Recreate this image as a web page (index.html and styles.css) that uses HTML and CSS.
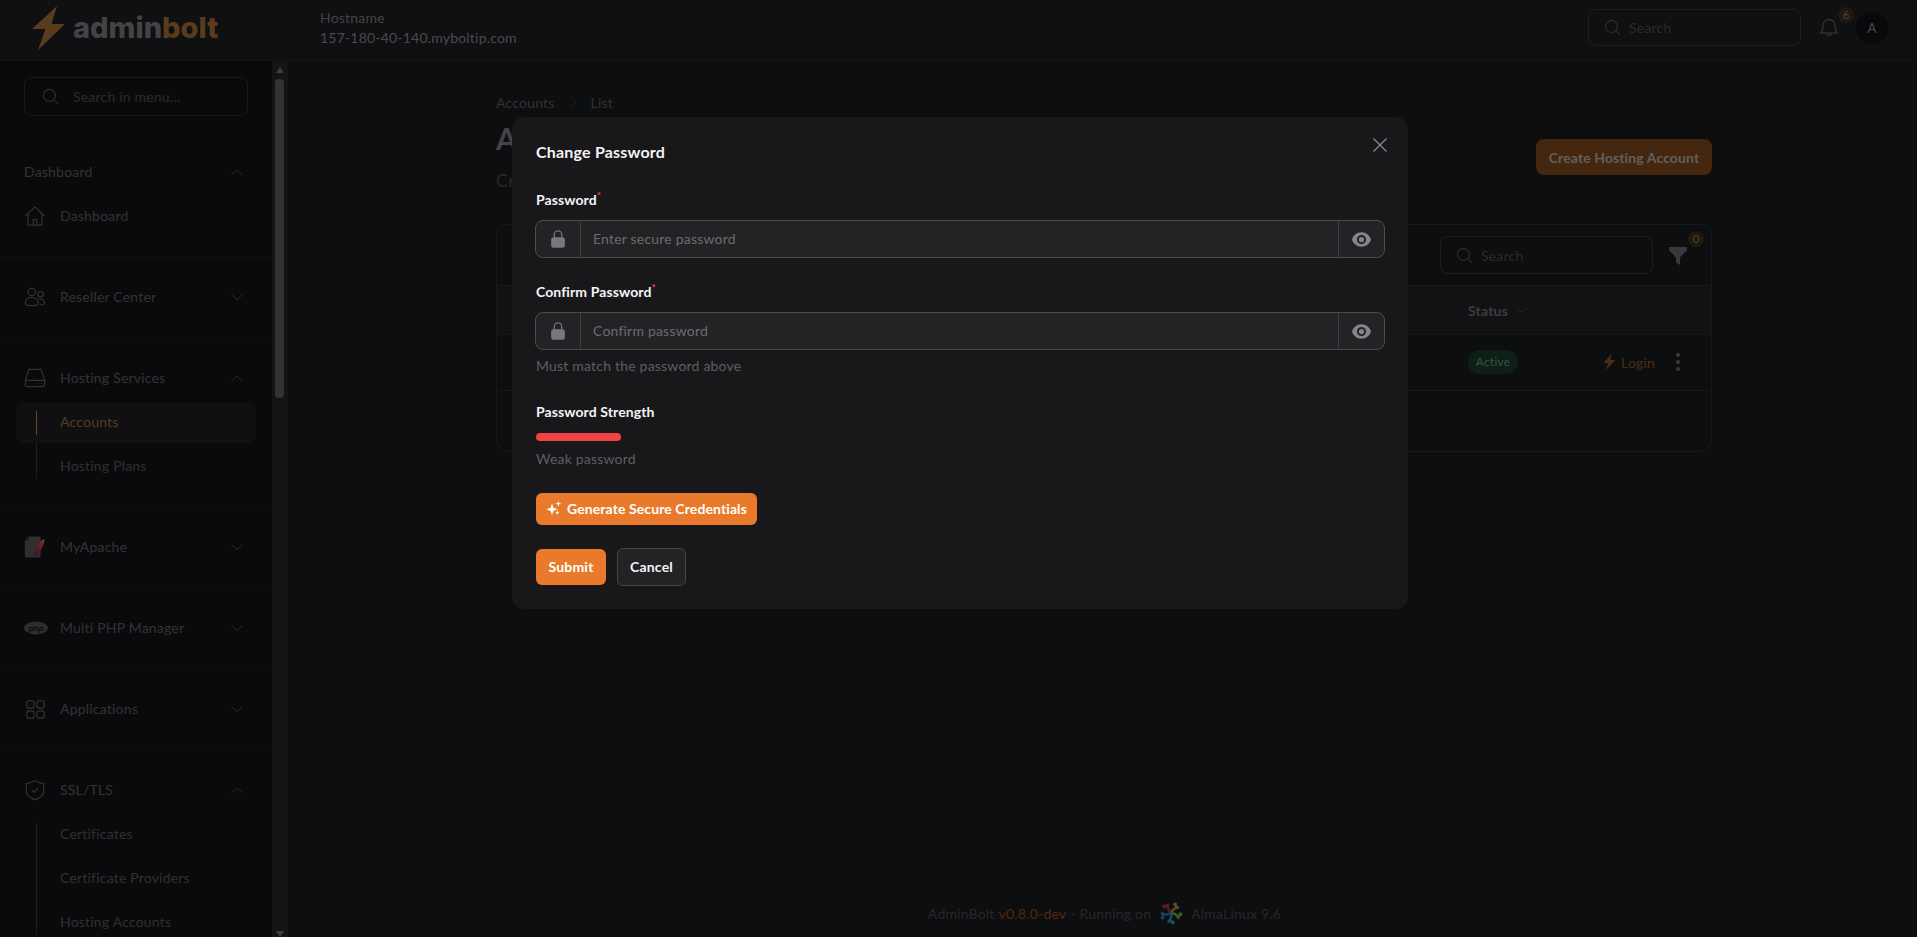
FILE: index.html
```html
<!DOCTYPE html>
<html lang="en">
<head>
    <meta charset="UTF-8">
    <meta name="viewport" content="width=device-width, initial-scale=1.0">
    <title>Accounts - AdminBolt</title>
    <link rel="stylesheet" href="styles.css">
</head>
<body>
    <svg class="sprite" xmlns="http://www.w3.org/2000/svg">
        <symbol id="i-search" viewBox="0 0 24 24"><circle cx="10.5" cy="10.5" r="8.5" fill="none" stroke="currentColor" stroke-width="1.6"/><path d="M17 17l5.5 5.5" fill="none" stroke="currentColor" stroke-width="1.6"/></symbol>
        <symbol id="i-up" viewBox="0 0 24 24"><path d="M2 17l10-9 10 9" fill="none" stroke="currentColor" stroke-width="1.8" stroke-linecap="round" stroke-linejoin="round"/></symbol>
        <symbol id="i-down" viewBox="0 0 24 24"><path d="M2 8l10 9 10-9" fill="none" stroke="currentColor" stroke-width="1.8" stroke-linecap="round" stroke-linejoin="round"/></symbol>
        <symbol id="i-bolt" viewBox="0 0 24 32"><path d="M16 0L0 18h9.5L5 32l19-20H13.5z" fill="currentColor"/></symbol>
        <symbol id="i-lock" viewBox="0 0 24 24"><path fill="currentColor" fill-rule="evenodd" d="M12 1.5a5.25 5.25 0 00-5.25 5.25v3a3 3 0 00-3 3v6.75a3 3 0 003 3h10.5a3 3 0 003-3v-6.75a3 3 0 00-3-3v-3A5.25 5.25 0 0012 1.5zm3.75 8.25v-3a3.75 3.75 0 10-7.5 0v3h7.5z" clip-rule="evenodd"/></symbol>
        <symbol id="i-eye" viewBox="0 0 24 24"><path fill="currentColor" d="M12 15a3 3 0 100-6 3 3 0 000 6z"/><path fill="currentColor" fill-rule="evenodd" d="M1.32 11.45C2.81 6.98 7.03 3.75 12 3.75c4.97 0 9.19 3.22 10.68 7.69.12.36.12.76 0 1.12-1.49 4.47-5.71 7.69-10.68 7.69-4.97 0-9.19-3.22-10.68-7.69a1.76 1.76 0 010-1.11zM17.25 12a5.25 5.25 0 11-10.5 0 5.25 5.25 0 0110.5 0z" clip-rule="evenodd"/></symbol>
        <symbol id="i-arm" viewBox="0 0 24 24"><path d="M11.500 11c-2.500-1.500-3-4-2.500-7.500M9 3.500c-1 1.500-2.500 2-4 1.500" fill="none" stroke="currentColor" stroke-width="2.400" stroke-linecap="round"/><circle cx="5" cy="5.500" r="1.900" fill="currentColor"/></symbol>
    </svg>

    <div class="app">
        <header class="topbar">
            <div class="brand">
                <svg class="brand-bolt" viewBox="0 0 33 44"><path d="M25 0L0 23h13.500L6 44l27-26H19.500z" fill="#5a3c1d"/></svg>
                <span class="brand-name">admin<span class="brand-accent">bolt</span></span>
            </div>
            <div class="hostname">
                <div class="hostname-label">Hostname</div>
                <div>157-180-40-140.myboltip.com</div>
            </div>
            <div class="topbar-right">
                <div class="search search-top">
                    <svg class="search-icon"><use href="#i-search"/></svg>
                    <span>Search</span>
                </div>
                <div class="bell">
                    <svg viewBox="0 0 24 24" width="24" height="24" fill="none" stroke="currentColor" stroke-width="1.5" stroke-linejoin="round"><path d="M6 9.500a6 6 0 0112 0c0 4 1 6 2.800 7.600H3.200C5 15.500 6 13.500 6 9.500z"/><path d="M9.300 17.500a2.800 2.800 0 005.400 0"/></svg>
                    <span class="count-badge bell-badge">6</span>
                </div>
                <div class="avatar">A</div>
            </div>
        </header>

        <div class="layout">
            <aside class="sidebar">
                <div class="search search-menu">
                    <svg class="search-icon"><use href="#i-search"/></svg>
                    <span>Search in menu...</span>
                </div>

                <nav class="menu">
                    <section class="menu-group menu-group-first">
                        <div class="menu-row">
                            <span class="menu-label">Dashboard</span>
                            <svg class="chev"><use href="#i-up"/></svg>
                        </div>
                        <div class="menu-row">
                            <svg class="menu-icon" viewBox="0 0 24 24" fill="none" stroke="currentColor" stroke-width="1.3" stroke-linejoin="round"><path d="M1.500 12L12 2l10.500 10M4.500 9.500V22h15V9.500M10 22v-6h4v6"/></svg>
                            <span class="menu-label">Dashboard</span>
                        </div>
                    </section>

                    <section class="menu-group">
                        <div class="menu-row">
                            <svg class="menu-icon" viewBox="0 0 24 24" fill="none" stroke="currentColor" stroke-width="1.3"><circle cx="8.500" cy="6.500" r="4"/><circle cx="18" cy="9" r="3"/><path d="M1.500 19c0-4 3-6.500 7-6.500s7 2.500 7 6.500c0 2-3 2.500-7 2.500s-7-.5-7-2.500zM16.500 14c3 0 6 1.500 6 4.500 0 1.500-2 2-4.500 2"/></svg>
                            <span class="menu-label">Reseller Center</span>
                            <svg class="chev"><use href="#i-down"/></svg>
                        </div>
                    </section>

                    <section class="menu-group">
                        <div class="menu-row">
                            <svg class="menu-icon" viewBox="0 0 24 24" fill="none" stroke="currentColor" stroke-width="1.3" stroke-linejoin="round"><path d="M5.500 2.500h13L22.500 14v5.500a2 2 0 01-2 2h-17a2 2 0 01-2-2V14zM1.500 14.500h21"/><path d="M16 18h.8M19 18h.8"/></svg>
                            <span class="menu-label">Hosting Services</span>
                            <svg class="chev"><use href="#i-up"/></svg>
                        </div>
                        <div class="submenu">
                            <div class="submenu-item active">Accounts</div>
                            <div class="submenu-item">Hosting Plans</div>
                        </div>
                    </section>

                    <section class="menu-group">
                        <div class="menu-row">
                            <svg class="menu-icon" viewBox="0 0 24 24">
                                <defs><linearGradient id="feather" x1="1" y1="0" x2="0" y2="1"><stop offset="0" stop-color="#6a4418"/><stop offset="0.5" stop-color="#5a1c26"/><stop offset="1" stop-color="#2c1430"/></linearGradient></defs>
                                <path d="M5 .5h13v23H1V5z" fill="#2f2f32"/><path d="M5 .5V5H1z" fill="#1c1c1e"/>
                                <path d="M22.500 3c-5 1.500-9 7-11 17l-1 3.500c5-3 11-10 12-20.500z" fill="url(#feather)"/>
                            </svg>
                            <span class="menu-label">MyApache</span>
                            <svg class="chev"><use href="#i-down"/></svg>
                        </div>
                    </section>

                    <section class="menu-group">
                        <div class="menu-row">
                            <svg class="menu-icon menu-icon-php" viewBox="0 0 24 14"><ellipse cx="12" cy="7" rx="12" ry="6.500" fill="#2e2e30"/><text class="php-text" x="12" y="9.800">php</text></svg>
                            <span class="menu-label">Multi PHP Manager</span>
                            <svg class="chev"><use href="#i-down"/></svg>
                        </div>
                    </section>

                    <section class="menu-group">
                        <div class="menu-row">
                            <svg class="menu-icon" viewBox="0 0 24 24" fill="none" stroke="currentColor" stroke-width="1.3"><rect x="3" y="3" width="8" height="8" rx="2.500"/><rect x="14" y="3" width="8" height="8" rx="2.500"/><rect x="3" y="14" width="8" height="8" rx="2.500"/><rect x="14" y="14" width="8" height="8" rx="2.500"/></svg>
                            <span class="menu-label">Applications</span>
                            <svg class="chev"><use href="#i-down"/></svg>
                        </div>
                    </section>

                    <section class="menu-group">
                        <div class="menu-row">
                            <svg class="menu-icon" viewBox="0 0 24 24" fill="none" stroke="currentColor" stroke-width="1.3" stroke-linejoin="round"><path d="M12 1.500c3 2.300 6 3.500 9.500 3.500v7c0 5.500-4 9-9.500 10.500C6.500 21 2.500 17.500 2.500 12V5C6 5 9 3.800 12 1.500z"/><path d="M8.500 12l2.500 2.500 4.500-5"/></svg>
                            <span class="menu-label">SSL/TLS</span>
                            <svg class="chev"><use href="#i-up"/></svg>
                        </div>
                        <div class="submenu">
                            <div class="submenu-item">Certificates</div>
                            <div class="submenu-item">Certificate Providers</div>
                            <div class="submenu-item">Hosting Accounts</div>
                        </div>
                    </section>
                </nav>
            </aside>

            <div class="scrollbar">
                <span class="scroll-arrow-up"></span>
                <span class="scroll-thumb"></span>
                <span class="scroll-arrow-down"></span>
            </div>

            <main class="main">
                <div class="content">
                    <div class="breadcrumbs">
                        <span>Accounts</span>
                        <svg class="crumb-sep" viewBox="0 0 24 24" fill="none" stroke="currentColor" stroke-width="1.800"><path d="M8 2l10 10-10 10"/></svg>
                        <span>List</span>
                    </div>
                    <div class="page-head">
                        <div>
                            <h1>Accounts</h1>
                            <p class="subtitle">Create and manage hosting accounts</p>
                        </div>
                        <div class="btn-create">Create Hosting Account</div>
                    </div>
                    <div class="table-card">
                        <div class="table-tools">
                            <div class="search search-table">
                                <svg class="search-icon"><use href="#i-search"/></svg>
                                <span>Search</span>
                            </div>
                            <div class="filter">
                                <svg viewBox="0 0 24 24" width="24" height="24"><path d="M3 4h18v3l-7 7.500V22l-4-2.500v-5L3 7z" fill="#39393c"/></svg>
                                <span class="count-badge filter-badge">0</span>
                            </div>
                        </div>
                        <div class="table-head">
                            <span>Status</span>
                            <svg class="chev"><use href="#i-down"/></svg>
                        </div>
                        <div class="table-row">
                            <span class="pill-active">Active</span>
                            <span class="login">
                                <svg class="login-bolt"><use href="#i-bolt"/></svg>
                                Login
                            </span>
                            <span class="dots"><i></i><i></i><i></i></span>
                        </div>
                    </div>
                </div>
                <footer class="footer">
                    <span>AdminBolt</span>
                    <span class="footer-version">v0.8.0-dev</span>
                    <span>- Running on</span>
                    <svg class="alma" viewBox="0 0 24 24">
                        <use href="#i-arm" color="#5a1d24"/>
                        <use href="#i-arm" color="#5a4a1c" transform="rotate(72 12 12)"/>
                        <use href="#i-arm" color="#3f5a22" transform="rotate(144 12 12)"/>
                        <use href="#i-arm" color="#1c4f5c" transform="rotate(216 12 12)"/>
                        <use href="#i-arm" color="#17406a" transform="rotate(288 12 12)"/>
                    </svg>
                    <span>AlmaLinux 9.6</span>
                </footer>
            </main>
        </div>
    </div>

    <div class="modal-layer">
        <div class="modal">
            <div class="modal-head">
                <h2>Change Password</h2>
                <svg class="modal-close" viewBox="0 0 14 14" fill="none" stroke="currentColor" stroke-width="1.200"><path d="M.5.500l13 13M13.500.500l-13 13"/></svg>
            </div>

            <label class="field-label">Password<sup>*</sup></label>
            <div class="input-group">
                <span class="input-side input-side-left"><svg class="lock"><use href="#i-lock"/></svg></span>
                <span class="input-text">Enter secure password</span>
                <span class="input-side input-side-right"><svg class="eye"><use href="#i-eye"/></svg></span>
            </div>

            <label class="field-label field-label-next">Confirm Password<sup>*</sup></label>
            <div class="input-group">
                <span class="input-side input-side-left"><svg class="lock"><use href="#i-lock"/></svg></span>
                <span class="input-text">Confirm password</span>
                <span class="input-side input-side-right"><svg class="eye"><use href="#i-eye"/></svg></span>
            </div>
            <p class="hint hint-match">Must match the password above</p>

            <div class="strength-title">Password Strength</div>
            <div class="strength-bar"></div>
            <p class="hint hint-weak">Weak password</p>

            <div class="btn-generate">
                <svg viewBox="0 0 24 24" width="16" height="16" fill="#fff"><path d="M9 5l2 6.500L17.500 14 11 16.500 9 23l-2-6.500L.5 14 7 11.500zM18.500 1l1 3.500L23 5.500l-3.500 1-1 3.500-1-3.500-3.500-1 3.500-1zM17 15.500l.9 2.600 2.600.9-2.600.9L17 22.500l-.9-2.600-2.600-.9 2.600-.9z"/></svg>
                Generate Secure Credentials
            </div>

            <div class="modal-actions">
                <div class="btn-submit">Submit</div>
                <div class="btn-cancel">Cancel</div>
            </div>
        </div>
    </div>
</body>
</html>
```
FILE: styles.css
```css
* {
    box-sizing: border-box;
}
html, body {
    height: 100%;
}
body {
    margin: 0;
    height: 937px;
    overflow: hidden;
    position: relative;
    font-family: Lato, "Noto Sans", sans-serif;
    font-size: 14px;
    letter-spacing: 0.2px;
    color: #333336;
    background-color: #0d0e10;
}
h1, h2, p {
    margin: 0;
}
.sprite {
    display: none;
}
.app {
    display: flex;
    flex-direction: column;
    height: 937px;
}

/* top bar */
.topbar {
    display: flex;
    align-items: center;
    height: 61px;
    flex-shrink: 0;
    padding-bottom: 5px;
    background-color: #0f1012;
    border-bottom: 1px solid #131416;
}
.brand {
    display: flex;
    align-items: center;
    width: 320px;
    padding-left: 32px;
    flex-shrink: 0;
}
.brand-bolt {
    width: 33px;
    height: 44px;
    margin-right: 8px;
}
.brand-name {
    font-family: Inter, Lato, sans-serif;
    font-size: 29px;
    font-weight: 800;
    letter-spacing: 0;
    color: #434345;
}
.brand-accent {
    color: #5a3c1d;
}
.hostname {
    font-size: 14px;
    line-height: 20px;
    color: #4a4a4e;
}
.hostname-label {
    color: #434346;
}
.topbar-right {
    display: flex;
    align-items: center;
    margin-left: auto;
    padding-right: 29px;
}
.search {
    display: flex;
    align-items: center;
    border: 1px solid #1e1f21;
    border-radius: 8px;
    color: #2a2b2d;
}
.search-icon {
    width: 17px;
    height: 17px;
    flex-shrink: 0;
    color: #2d2e30;
}
.search-top {
    width: 213px;
    height: 37px;
    padding-left: 15px;
    gap: 8px;
}
.bell {
    position: relative;
    width: 24px;
    height: 24px;
    margin-left: 16px;
    color: #2d2e30;
}
.count-badge {
    position: absolute;
    width: 16px;
    height: 16px;
    border-radius: 50%;
    background-color: #1e1913;
    color: #5a3c1d;
    font-size: 12px;
    line-height: 16px;
    text-align: center;
}
.bell-badge {
    top: -9px;
    left: 21px;
}
.avatar {
    width: 32px;
    height: 32px;
    margin-left: 15px;
    border-radius: 50%;
    background-color: #09090b;
    color: #4a4c50;
    font-size: 13px;
    line-height: 32px;
    text-align: center;
}

/* sidebar */
.layout {
    display: flex;
    flex: 1;
    min-height: 0;
}
.sidebar {
    width: 272px;
    flex-shrink: 0;
    padding-top: 16px;
    overflow: hidden;
    background-color: #0a0a0c;
}
.search-menu {
    width: 224px;
    height: 39px;
    margin-left: 24px;
    padding-left: 17px;
    gap: 14px;
    border-color: #1a1b1d;
    color: #2a2a2d;
}
.menu {
    padding-top: 16px;
}
.menu-group {
    padding: 18px 0 18px;
    border-bottom: 1px solid #0e0f11;
}
.menu-group:last-child {
    border-bottom: none;
}
.menu-row {
    display: flex;
    align-items: center;
    height: 44px;
    padding: 0 29px 0 24px;
    color: #333336;
}
.menu-label {
    padding-bottom: 1px;
}
.menu-icon {
    width: 22px;
    height: 22px;
    margin-right: 14px;
    flex-shrink: 0;
    color: #333336;
}
.menu-icon-php {
    width: 24px;
    height: 14px;
    margin-right: 12px;
}
.php-text {
    font-family: "Liberation Sans", sans-serif;
    font-size: 8px;
    font-style: italic;
    font-weight: 700;
    letter-spacing: 0;
    text-anchor: middle;
    fill: #0a0a0c;
}
.chev {
    width: 12px;
    height: 12px;
    margin-left: auto;
    color: #2b2c2e;
}
.submenu {
    position: relative;
}
.submenu::before {
    content: "";
    position: absolute;
    left: 36px;
    top: 11px;
    bottom: 9px;
    width: 1px;
    background-color: #1d1e20;
}
.submenu-item {
    position: relative;
    height: 44px;
    line-height: 44px;
    padding-left: 60px;
    color: #303033;
}
.submenu-item.active {
    margin: 3px 16px 1px;
    height: 40px;
    line-height: 38px;
    padding-left: 44px;
    border-radius: 8px;
    background-color: #101012;
    color: #5a3c1d;
}
.submenu-item.active::before {
    content: "";
    position: absolute;
    left: 20px;
    top: 8px;
    width: 1px;
    height: 24px;
    background-color: #6b451f;
}

/* fake scrollbar of the sidebar */
.scrollbar {
    position: relative;
    width: 16px;
    flex-shrink: 0;
    background-color: #141415;
}
.scroll-thumb {
    position: absolute;
    left: 3px;
    top: 18px;
    width: 9px;
    height: 319px;
    border-radius: 4px;
    background-color: #333334;
}
.scroll-arrow-up, .scroll-arrow-down {
    position: absolute;
    left: 4px;
    width: 0;
    height: 0;
    border-left: 4px solid transparent;
    border-right: 4px solid transparent;
}
.scroll-arrow-up {
    top: 6px;
    border-bottom: 6px solid #3c3c3d;
}
.scroll-arrow-down {
    bottom: 0;
    border-top: 6px solid #3c3c3d;
}

/* main */
.main {
    flex: 1;
    display: flex;
    flex-direction: column;
    min-width: 0;
}
.content {
    flex: 1;
    margin: 0 205px 0 208px;
    padding-top: 31px;
}
.breadcrumbs {
    display: flex;
    align-items: center;
    height: 20px;
    color: #323235;
}
.crumb-sep {
    width: 10px;
    height: 12px;
    margin: 0 13px 0 13px;
    color: #28292b;
}
.page-head {
    display: flex;
    justify-content: space-between;
    align-items: flex-start;
    margin-top: 8px;
}
h1 {
    font-size: 30px;
    line-height: 36px;
    font-weight: 700;
    color: #444446;
}
.subtitle {
    margin-top: 14px;
    font-size: 18px;
    line-height: 20px;
    color: #29292c;
}
.btn-create {
    display: flex;
    align-items: center;
    justify-content: center;
    width: 176px;
    height: 36px;
    margin-top: 19px;
    border-radius: 8px;
    background-color: #45260f;
    color: #61605e;
    font-weight: 700;
    letter-spacing: 0.1px;
}
.table-card {
    margin-top: 34px;
    height: 228px;
    border: 1px solid #17181a;
    border-radius: 12px;
}
.table-tools {
    display: flex;
    align-items: center;
    justify-content: flex-end;
    height: 60px;
    padding-right: 21px;
}
.search-table {
    width: 213px;
    height: 38px;
    padding-left: 15px;
    gap: 8px;
}
.filter {
    position: relative;
    width: 24px;
    height: 24px;
    margin-left: 13px;
}
.filter-badge {
    top: -12px;
    left: 22px;
}
.table-head {
    display: flex;
    align-items: center;
    height: 50px;
    padding-left: 971px;
    background-color: #111214;
    border-top: 1px solid #17181a;
    border-bottom: 1px solid #17181a;
    color: #3c3d40;
    font-weight: 700;
}
.table-head .chev {
    margin-left: 8px;
}
.table-row {
    display: flex;
    align-items: center;
    height: 56px;
    padding-left: 971px;
    padding-bottom: 1px;
    border-bottom: 1px solid #17181a;
}
.pill-active {
    width: 50px;
    height: 24px;
    border-radius: 12px;
    background-color: #0f1e16;
    color: #2f5a3c;
    font-size: 12px;
    line-height: 24px;
    text-align: center;
}
.login {
    display: flex;
    align-items: center;
    gap: 5px;
    margin-left: 85px;
    color: #4a2e14;
}
.login-bolt {
    width: 13px;
    height: 16px;
    color: #4a2e14;
}
.dots {
    display: flex;
    flex-direction: column;
    gap: 3px;
    margin-left: 21px;
}
.dots i {
    width: 4px;
    height: 4px;
    border-radius: 50%;
    background-color: #3a3a3d;
}
.footer {
    display: flex;
    align-items: center;
    justify-content: center;
    gap: 4px;
    height: 48px;
    padding-left: 4px;
    color: #27272a;
}
.footer-version {
    color: #55280f;
}
.alma {
    width: 24px;
    height: 24px;
    margin: 0 4px;
}

/* modal on top of the dimmed page */
.modal-layer {
    position: absolute;
    top: 117px;
    left: 512px;
}
.modal {
    width: 896px;
    height: 492px;
    padding: 24px;
    border-radius: 12px;
    background-color: #18181b;
    color: #f4f4f5;
}
.modal-head {
    display: flex;
    justify-content: space-between;
    align-items: flex-start;
    height: 24px;
}
h2 {
    font-size: 16px;
    line-height: 22px;
    font-weight: 700;
}
.modal-close {
    width: 14px;
    height: 14px;
    margin: -3px -3px 0 0;
    color: #8b8b90;
}
.field-label {
    display: block;
    margin-top: 25px;
    height: 20px;
    font-weight: 700;
    line-height: 20px;
    letter-spacing: 0.1px;
}
.field-label-next {
    margin-top: 24px;
}
.field-label sup {
    color: #ef4444;
    font-size: 10px;
    line-height: 0;
}
.input-group {
    display: flex;
    align-items: center;
    height: 38px;
    margin-top: 10px;
    margin-left: -1px;
    margin-right: -1px;
    border: 1px solid #4c4c50;
    border-radius: 8px;
    background-color: #232326;
}
.input-side {
    display: flex;
    align-items: center;
    justify-content: center;
    height: 100%;
    flex-shrink: 0;
}
.input-side-left {
    width: 45px;
    border-right: 1px solid #3f3f43;
}
.input-side-right {
    width: 46px;
    border-left: 1px solid #3f3f43;
}
.input-text {
    flex: 1;
    padding-left: 12px;
    padding-bottom: 2px;
    color: #6b6b70;
}
.lock {
    width: 20px;
    height: 20px;
    color: #77777d;
}
.eye {
    width: 21px;
    height: 21px;
    color: #85858a;
}
.hint {
    height: 20px;
    line-height: 20px;
    color: #5e5e63;
}
.hint-match {
    margin-top: 6px;
}
.strength-title {
    margin-top: 26px;
    height: 20px;
    line-height: 20px;
    font-weight: 700;
    letter-spacing: 0.1px;
}
.strength-bar {
    width: 85px;
    height: 8px;
    margin-top: 11px;
    border-radius: 4px;
    background-color: #ef4444;
}
.hint-weak {
    margin-top: 8px;
}
.btn-generate {
    display: inline-flex;
    align-items: center;
    gap: 5px;
    height: 32px;
    margin-top: 24px;
    padding: 0 10px 2px;
    border-radius: 6px;
    background-color: #ea7a2b;
    color: #fff;
    font-weight: 700;
    letter-spacing: 0.1px;
    white-space: nowrap;
}
.modal-actions {
    display: flex;
    align-items: center;
    gap: 11px;
    margin-top: 23px;
}
.btn-submit {
    width: 70px;
    height: 36px;
    border-radius: 6px;
    background-color: #ea7a2b;
    color: #fff;
    font-weight: 700;
    line-height: 35px;
    text-align: center;
}
.btn-cancel {
    width: 69px;
    height: 38px;
    border: 1px solid #46464b;
    border-radius: 6px;
    background-color: #232326;
    font-weight: 700;
    line-height: 35px;
    text-align: center;
}
```
